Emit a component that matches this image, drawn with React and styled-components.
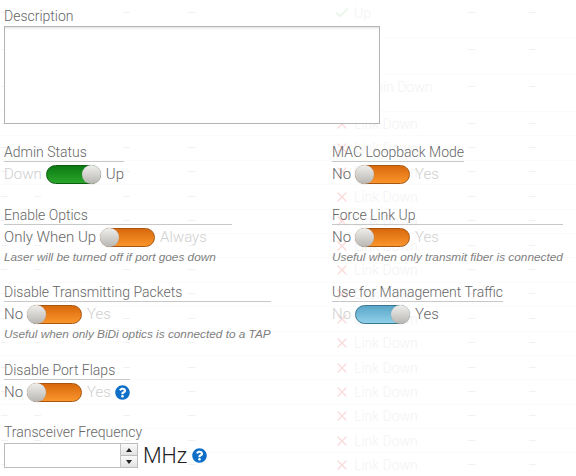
import React from "react";
import styled, { createGlobalStyle } from "styled-components";
import { FaQuestionCircle } from "react-icons/fa";
import { Check, X } from "lucide-react";

const GlobalStyle = createGlobalStyle`
  html, body {
    margin: 0;
    padding: 0;
    background: #fff;
    overflow: hidden;
  }
  body {
    font-family: Roboto, "Liberation Sans", Arial, sans-serif;
  }
`;

const Page = styled.div`
  position: relative;
  width: 576px;
  height: 476px;
  overflow: hidden;
`;

/* faded table showing through behind the dialog */
const Ghost = styled.div`
  position: absolute;
  top: 1px;
  left: 0;
  right: 0;
  pointer-events: none;
`;

const GhostRow = styled.div`
  display: grid;
  grid-template-columns: 33px 89px 65px 96px 51px 20px 113px 61px 48px;
  align-items: center;
  height: ${(p) => (p.$tall ? 37 : 24.4)}px;
  padding-bottom: ${(p) => (p.$tall ? 12 : 0)}px;
  box-sizing: border-box;
  border-bottom: 1px solid #fbfbfb;
  color: #f3f3f3;
  font-size: 14px;
  font-weight: 300;
`;

const GhostDash = styled.span`
  color: #efefef;
`;

const GhostMark = styled.span`
  display: flex;
  color: ${(p) => (p.$ok ? "#e4f3e4" : "#fbdcdc")};
`;

const Form = styled.div`
  position: relative;
  display: grid;
  grid-template-columns: 328px 1fr;
  padding: 8px 0 0 4px;
  color: #666;
  font-size: 14px;
  font-weight: 300;
`;

const DescriptionBlock = styled.div`
  grid-column: 1 / 3;
  margin-bottom: 20px;
`;

const Label = styled.div`
  line-height: 16px;
  padding-bottom: ${(p) => (p.$bare ? 2 : 1)}px;
  border-bottom: ${(p) => (p.$bare ? "none" : "1px solid #c8c8c8")};
`;

const Description = styled.div`
  width: 376px;
  height: 98px;
  box-sizing: border-box;
  border: 1px solid #b4b4b4;
  box-shadow: inset 0 3px 3px -2px #ddd;
  background: #fff;
`;

const Field = styled.div`
  width: ${(p) => (p.$width ? `${p.$width}px` : "fit-content")};
  margin-bottom: ${(p) => p.$gap}px;
`;

const SwitchRow = styled.div`
  display: flex;
  align-items: center;
  gap: 4px;
  height: 20px;
  margin-top: 2px;
  font-size: 15px;
  line-height: 20px;
`;

const Option = styled.span`
  color: ${(p) => (p.$dim ? "#cfcfcf" : "#666")};
`;

const colors = {
  green: ["#0c7a14", "#2aa62a", "#0b5c10"],
  orange: ["#d9690c", "#fa952c", "#a8560f"],
  blue: ["#5aa6c8", "#8fd0ea", "#3b7690"],
};

const Track = styled.span`
  position: relative;
  display: block;
  width: 55px;
  height: 19px;
  margin-right: 1px;
  box-sizing: border-box;
  border: 1px solid ${(p) => colors[p.$color][2]};
  border-radius: 10px;
  background: linear-gradient(${(p) => colors[p.$color][0]}, ${(p) => colors[p.$color][1]});
`;

const Thumb = styled.span`
  position: absolute;
  top: -1px;
  ${(p) => (p.$on ? "right: -1px;" : "left: -1px;")}
  width: 19px;
  height: 19px;
  border-radius: 50%;
  background: linear-gradient(#efefed, #b8b6b2);
  box-shadow: 0 0 1px #8a8a8a;
`;

const Hint = styled.div`
  margin-top: 4px;
  font-family: "Liberation Sans", Arial, sans-serif;
  font-size: 11.8px;
  font-weight: 400;
  line-height: 13px;
  font-style: italic;
  color: #808080;
  white-space: nowrap;
`;

const Help = styled(FaQuestionCircle)`
  display: block;
  width: 15px;
  height: 15px;
  color: #0e6fc9;
`;

const FreqRow = styled.div`
  display: flex;
  align-items: center;
  gap: 5px;
  margin-top: 1px;
`;

const Spin = styled.div`
  display: flex;
  width: 134px;
  height: 25px;
  box-sizing: border-box;
  border: 1px solid #bdbdbd;
`;

const SpinInput = styled.input`
  flex: 1;
  min-width: 0;
  border: none;
  outline: none;
  padding: 0;
  background: #fff;
`;

const SpinButtons = styled.div`
  display: flex;
  flex-direction: column;
  width: 16px;
  border-left: 1px solid #c4c4c4;
`;

const SpinButton = styled.div`
  flex: 1;
  display: flex;
  align-items: center;
  justify-content: center;
  background: linear-gradient(#fafafa, #e2e2e2);

  & + & {
    border-top: 1px solid #bdbdbd;
  }

  &::after {
    content: "";
    border-left: 3.5px solid transparent;
    border-right: 3.5px solid transparent;
    ${(p) => (p.$up ? "border-bottom: 4px solid #222;" : "border-top: 4px solid #222;")}
  }
`;

const Unit = styled.span`
  font-size: 21.5px;
  font-weight: 300;
  line-height: 25px;
  color: #222;
`;

const Switch = ({ left, right, on, color }) => (
  <SwitchRow>
    <Option $dim={on}>{left}</Option>
    <Track $color={color}>
      <Thumb $on={on} />
    </Track>
    <Option $dim={!on}>{right}</Option>
  </SwitchRow>
);

const ghostRows = [
  { tall: true, mark: "ok", text: "Up" },
  { tall: true, text: "" },
  { tall: true, text: "Admin Down" },
  ...Array.from({ length: 15 }, () => ({ mark: "x", text: "Link Down" })),
];

const GhostTable = () => (
  <Ghost>
    {ghostRows.map((row, i) => (
      <GhostRow key={i} $tall={row.tall}>
        <GhostDash>–</GhostDash>
        <GhostDash>–</GhostDash>
        <GhostDash>–</GhostDash>
        <GhostDash>–</GhostDash>
        <span />
        <GhostMark $ok={row.mark === "ok"}>
          {row.mark === "ok" && <Check size={16} strokeWidth={2} />}
          {row.mark === "x" && <X size={16} strokeWidth={2} />}
        </GhostMark>
        <span>{row.text}</span>
        <GhostDash>–</GhostDash>
        <GhostDash>–</GhostDash>
      </GhostRow>
    ))}
  </Ghost>
);

export default function App() {
  return (
    <Page>
      <GlobalStyle />
      <GhostTable />
      <Form>
        <DescriptionBlock>
          <Label $bare>Description</Label>
          <Description />
        </DescriptionBlock>

        <Field $gap={23}>
          <Label>Admin Status</Label>
          <Switch left="Down" right="Up" on color="green" />
        </Field>
        <Field $gap={23}>
          <Label>MAC Loopback Mode</Label>
          <Switch left="No" right="Yes" color="orange" />
        </Field>

        <Field $gap={20} $width={228}>
          <Label>Enable Optics</Label>
          <Switch left="Only When Up" right="Always" color="orange" />
          <Hint>Laser will be turned off if port goes down</Hint>
        </Field>
        <Field $gap={20}>
          <Label>Force Link Up</Label>
          <Switch left="No" right="Yes" color="orange" />
          <Hint>Useful when only transmit fiber is connected</Hint>
        </Field>

        <Field $gap={21}>
          <Label>Disable Transmitting Packets</Label>
          <Switch left="No" right="Yes" color="orange" />
          <Hint>Useful when only BiDi optics is connected to a TAP</Hint>
        </Field>
        <Field $gap={21}>
          <Label>Use for Management Traffic</Label>
          <Switch left="No" right="Yes" on color="blue" />
        </Field>

        <Field $gap={22}>
          <Label>Disable Port Flaps</Label>
          <SwitchRow>
            <Option>No</Option>
            <Track $color="orange">
              <Thumb />
            </Track>
            <Option $dim>Yes</Option>
            <Help />
          </SwitchRow>
        </Field>
        <span />

        <Field $gap={0}>
          <Label $bare>Transceiver Frequency</Label>
          <FreqRow>
            <Spin>
              <SpinInput type="text" />
              <SpinButtons>
                <SpinButton $up />
                <SpinButton />
              </SpinButtons>
            </Spin>
            <Unit>MHz</Unit>
            <Help />
          </FreqRow>
        </Field>
      </Form>
    </Page>
  );
}
